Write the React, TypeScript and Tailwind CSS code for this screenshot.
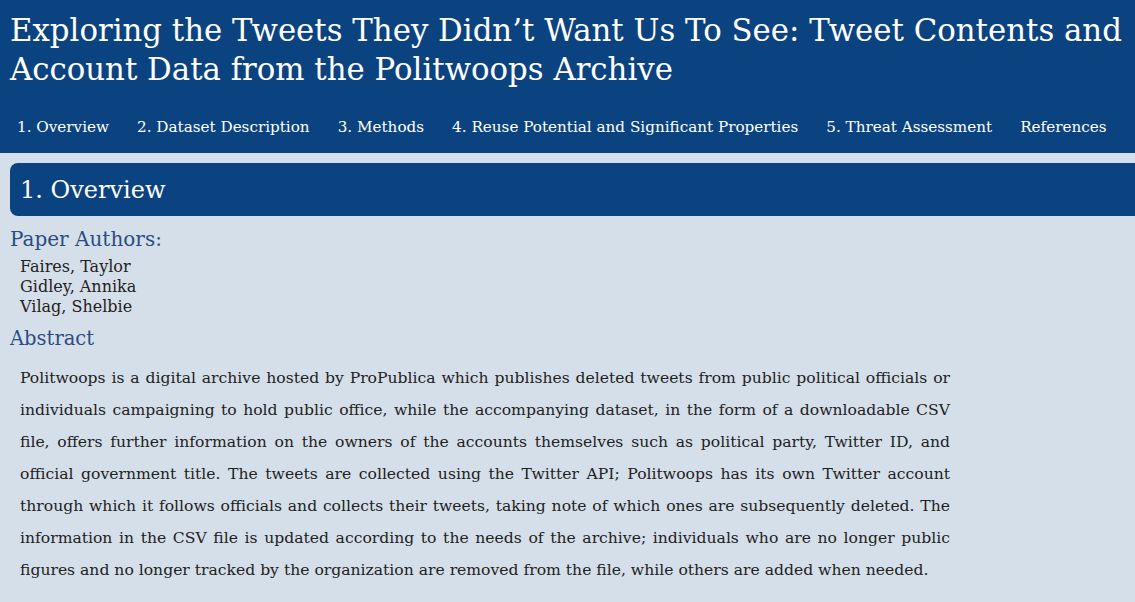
import React from 'react';

const serif = { fontFamily: '"DejaVu Serif", "Liberation Serif", serif' };

const navItems = [
  '1. Overview',
  '2. Dataset Description',
  '3. Methods',
  '4. Reuse Potential and Significant Properties',
  '5. Threat Assessment',
  'References',
];

const authors = ['Faires, Taylor', 'Gidley, Annika', 'Vilag, Shelbie'];

const App: React.FC = () => {
  return (
    <div className="min-h-screen bg-[#d5dfe9] text-[#222]" style={serif}>
      <header className="bg-[#0b4380] text-white">
        <h1 className="px-[10px] pt-[11px] text-[30.8px] leading-[39px]">
          Exploring the Tweets They Didn’t Want Us To See: Tweet Contents and Account Data from the Politwoops Archive
        </h1>
        <nav className="flex gap-[28px] pl-[17px] pt-[28px] pb-[16px] text-[15.2px] leading-[20px]">
          {navItems.map((item) => (
            <a key={item} href="#" className="whitespace-nowrap hover:underline">
              {item}
            </a>
          ))}
        </nav>
      </header>

      <section className="pt-[10px]">
        <h2 className="ml-[10px] flex h-[53px] items-center rounded-l-lg bg-[#0b4380] pl-[10px] text-[24px] text-white">
          1. Overview
        </h2>

        <div className="px-[10px]">
          <h3 className="mt-[10px] text-[20px] leading-[26px] text-[#2b4b83]">Paper Authors:</h3>
          <ul className="mt-[5px] pl-[10px] text-[16px] leading-[20px]">
            {authors.map((a) => (
              <li key={a}>{a}</li>
            ))}
          </ul>

          <h3 className="mt-[9px] text-[19.5px] leading-[26px] text-[#2b4b83]">Abstract</h3>
          <p className="mt-[10px] w-[940px] pl-[10px] text-justify text-[15.6px] leading-[32px]">
            Politwoops is a digital archive hosted by ProPublica which publishes deleted tweets from public political
            officials or individuals campaigning to hold public office, while the accompanying dataset, in the form of a
            downloadable CSV file, offers further information on the owners of the accounts themselves such as political
            party, Twitter ID, and official government title. The tweets are collected using the Twitter API; Politwoops
            has its own Twitter account through which it follows officials and collects their tweets, taking note of
            which ones are subsequently deleted. The information in the CSV file is updated according to the needs of the
            archive; individuals who are no longer public figures and no longer tracked by the organization are removed
            from the file, while others are added when needed.
          </p>
        </div>
      </section>
    </div>
  );
};

export default App;
